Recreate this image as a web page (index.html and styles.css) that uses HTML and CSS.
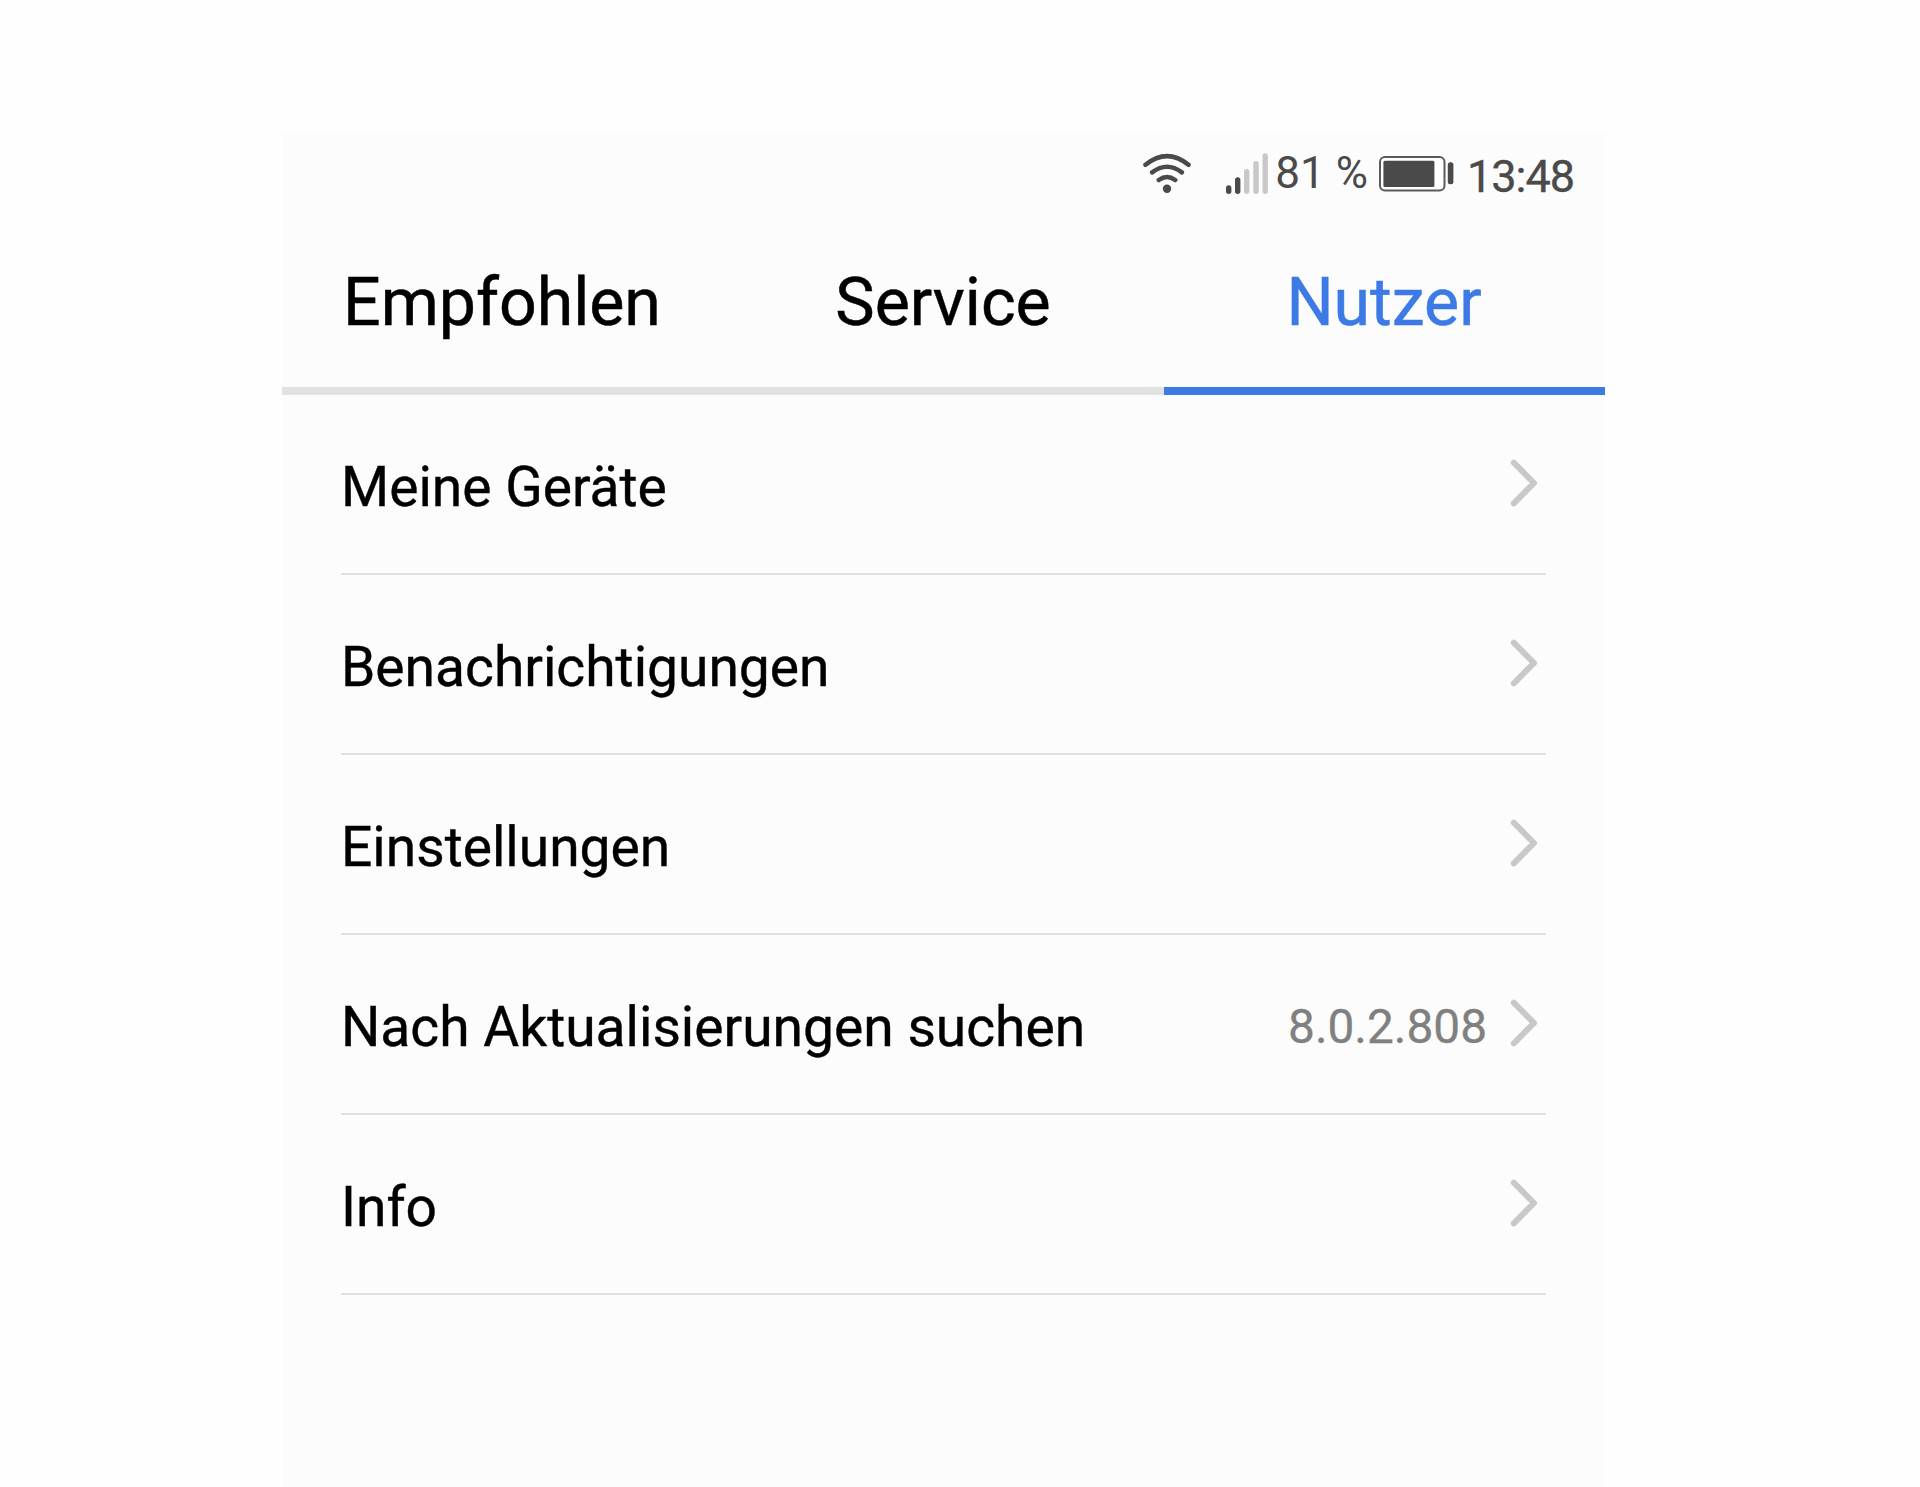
FILE: index.html
```html
<!DOCTYPE html>
<html lang="de">

<head>
    <meta charset="UTF-8">
    <meta name="viewport" content="width=device-width, initial-scale=1.0">
    <title>Nutzer</title>
    <link rel="stylesheet" href="styles.css">
</head>

<body>
    <div class="phone">
        <header class="status-bar">
            <svg class="wifi" width="48" height="48" viewBox="0 0 48 48">
                <path d="M2.5 14.7Q24 -2.6 45.5 14.7M9.2 22.3Q24 11.2 38.8 22.3M15.8 30Q24 24 32.2 30" />
                <circle cx="24" cy="38.8" r="4.2" />
            </svg>
            <svg class="signal" width="44" height="48" viewBox="0 0 44 48">
                <path class="on" d="M4.7 38V41.3M13.7 30V41.3" />
                <path class="off" d="M22.7 21.7V41.3M32 13.7V41.3M41.2 6V41.3" />
            </svg>
            <span class="percent">81 %</span>
            <svg class="battery" width="76" height="48" viewBox="0 0 76 48">
                <rect class="shell" x="1" y="7" width="64.5" height="33.5" rx="5" />
                <rect x="4.4" y="10.7" width="51" height="26.3" rx="1.5" />
                <rect x="68.8" y="12.3" width="5.6" height="22" rx="2.5" />
            </svg>
            <span class="clock">13:48</span>
        </header>

        <nav class="tabs">
            <a href="#">Empfohlen</a>
            <a href="#">Service</a>
            <a href="#" class="active">Nutzer</a>
        </nav>

        <main>
            <ul class="menu">
                <li>
                    <span class="label">Meine Geräte</span>
                    <svg class="chevron" width="28" height="48" viewBox="0 0 28 48"><path d="M3.8 3.7L24 24L3.8 44.3" /></svg>
                </li>
                <li>
                    <span class="label">Benachrichtigungen</span>
                    <svg class="chevron" width="28" height="48" viewBox="0 0 28 48"><path d="M3.8 3.7L24 24L3.8 44.3" /></svg>
                </li>
                <li>
                    <span class="label">Einstellungen</span>
                    <svg class="chevron" width="28" height="48" viewBox="0 0 28 48"><path d="M3.8 3.7L24 24L3.8 44.3" /></svg>
                </li>
                <li>
                    <span class="label">Nach Aktualisierungen suchen</span>
                    <span class="version">8.0.2.808</span>
                    <svg class="chevron" width="28" height="48" viewBox="0 0 28 48"><path d="M3.8 3.7L24 24L3.8 44.3" /></svg>
                </li>
                <li>
                    <span class="label">Info</span>
                    <svg class="chevron" width="28" height="48" viewBox="0 0 28 48"><path d="M3.8 3.7L24 24L3.8 44.3" /></svg>
                </li>
            </ul>
        </main>
    </div>
</body>

</html>
```

FILE: styles.css
```css
* {
    margin: 0;
    padding: 0;
    box-sizing: border-box;
    font-family: Roboto, "Liberation Sans", sans-serif;
}

body {
    background-color: #fefefe;
    padding: 132px 0 0 282px;
}

.phone {
    width: 1323px;
    height: 1355px;
    background-color: #fcfcfc;
}

.status-bar {
    height: 84px;
    padding: 18px 31px 0 0;
    display: flex;
    justify-content: flex-end;
    align-items: flex-start;
    color: #4a4a4a;
}

.status-bar svg {
    fill: #4a4a4a;
}

.wifi {
    margin-right: 33px;
}

.wifi path {
    fill: none;
    stroke: #4a4a4a;
    stroke-width: 4.6;
    stroke-linecap: round;
}

.signal {
    margin-right: 7px;
}

.signal path {
    stroke-width: 5.4;
    stroke-linecap: round;
}

.signal .on {
    stroke: #4a4a4a;
}

.signal .off {
    stroke: #c8c8c8;
}

.percent {
    font-size: 44px;
    line-height: 46px;
    margin-right: 11px;
}

.battery .shell {
    fill: #fff;
    stroke: #5a5a5a;
    stroke-width: 2;
}

.clock {
    font-size: 45px;
    line-height: 53px;
    letter-spacing: -1px;
    margin-left: 12px;
    -webkit-text-stroke: 0.4px #4a4a4a;
}

.tabs {
    height: 179px;
    display: flex;
}

.tabs a {
    flex: 1;
    display: flex;
    justify-content: center;
    align-items: center;
    padding: 2px 1px 0 0;
    border-bottom: 8px solid #e1e1e1;
    color: #000;
    font-size: 66.2px;
    text-decoration: none;
    -webkit-text-stroke: 0.5px;
}

.tabs .active {
    color: #3c7ae6;
    border-bottom-color: #3c7ae6;
}

.menu {
    list-style: none;
    padding: 0 59px;
}

.menu li {
    height: 180px;
    padding: 5px 8px 0 0;
    display: flex;
    align-items: center;
    border-bottom: 2px solid #e0e0e0;
}

.label {
    flex: 1;
    font-size: 55.15px;
    color: #000;
    -webkit-text-stroke: 0.4px;
}

.version {
    font-size: 47.8px;
    color: #808080;
    margin-right: 23px;
    -webkit-text-stroke: 0.3px;
}

.chevron {
    margin-bottom: 8px;
}

.chevron path {
    fill: none;
    stroke: #c8c8c8;
    stroke-width: 6;
    stroke-linecap: round;
    stroke-linejoin: round;
}
```
